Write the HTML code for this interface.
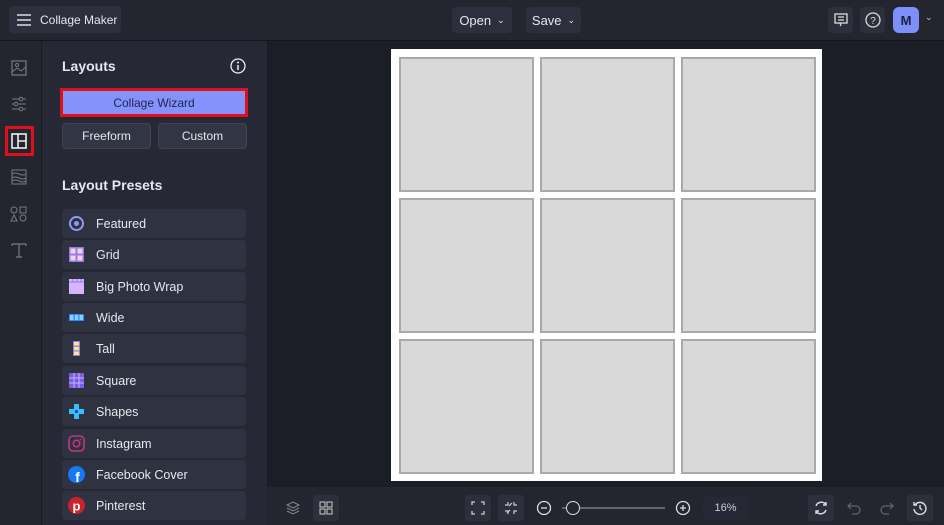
<!DOCTYPE html>
<html><head><style>
*{box-sizing:border-box;margin:0;padding:0}
body{width:944px;height:525px;background:#1c1e27;font-family:"Liberation Sans",sans-serif;color:#e6e7ee;position:relative;overflow:hidden}
.abs{position:absolute}
.top{left:0;top:0;width:944px;height:41px;background:#23252f;border-bottom:1px solid #15161d}
.btn{position:absolute;background:#2d303c;border-radius:4px;font-size:13px;display:flex;align-items:center;justify-content:center;color:#e6e7ee;white-space:nowrap}
.rail{left:0;top:41px;width:42px;height:484px;background:#23252f;border-right:1px solid #1a1b22}
.panel{left:42px;top:41px;width:225px;height:484px;background:#262935}
.row{position:absolute;left:62px;width:184px;height:29px;background:#2f3240;border-radius:4px;font-size:12.5px;display:flex;align-items:center;padding-left:34px;white-space:nowrap}
.ic{position:absolute;left:7px;top:7px;width:15px;height:15px}
.cell{position:absolute;width:135px;height:135px;background:#d9d9d9;border:2px solid #a9a9a9}
.bottom{left:267px;top:487px;width:677px;height:38px;background:#23252f}
.bb{position:absolute;top:495px;width:26px;height:26px;background:#2d303c;border-radius:3px}
svg{display:block}
</style></head><body>
<div class="abs top"></div>
<div class="btn" style="left:9px;top:6px;width:112px;height:27px;justify-content:flex-start;padding-left:8px;font-size:12px">
<svg width="14" height="12"><path d="M0 1h14M0 6h14M0 11h14" stroke="#ddd" stroke-width="1.5"/></svg><span style="margin-left:9px">Collage Maker</span></div>
<div class="btn" style="left:452px;top:7px;width:60px;height:26px">Open <span style="font-size:9px;margin-left:6px">&#8964;</span></div>
<div class="btn" style="left:526px;top:7px;width:55px;height:26px">Save <span style="font-size:9px;margin-left:6px">&#8964;</span></div>
<div class="btn" style="left:828px;top:7px;width:25px;height:26px"><svg width="14" height="14"><rect x="1" y="1" width="12" height="9" fill="none" stroke="#ddd" stroke-width="1.3"/><path d="M4 4h6M4 7h6M6 10l1 3" stroke="#ddd" stroke-width="1.2"/></svg></div>
<div class="btn" style="left:860px;top:7px;width:25px;height:26px"><svg width="16" height="16"><circle cx="8" cy="8" r="7" fill="none" stroke="#ddd" stroke-width="1.3"/><text x="8" y="12" font-size="10" fill="#ddd" text-anchor="middle" font-family="Liberation Sans">?</text></svg></div>
<div class="btn" style="left:893px;top:7px;width:26px;height:26px;background:#7e8ff9;border-radius:6px;color:#1d2140;font-weight:bold;font-size:13px">M</div>
<div class="abs" style="left:925px;top:12px;font-size:9px;color:#ccc">&#8964;</div>

<div class="abs rail"></div>
<svg class="abs" style="left:11px;top:60px" width="16" height="16"><rect x="1" y="1" width="14" height="14" fill="none" stroke="#777b88" stroke-width="1.2"/><path d="M1 12l5-4 4 3 5-4" fill="none" stroke="#777b88"/><circle cx="6" cy="5" r="1.5" fill="none" stroke="#777b88"/></svg>
<svg class="abs" style="left:11px;top:96px" width="16" height="16"><path d="M1 3h14M1 8h14M1 13h14" stroke="#777b88"/><circle cx="10" cy="3" r="1.8" fill="#23252f" stroke="#777b88"/><circle cx="5" cy="8" r="1.8" fill="#23252f" stroke="#777b88"/><circle cx="10" cy="13" r="1.8" fill="#23252f" stroke="#777b88"/></svg>
<div class="abs" style="left:5px;top:126px;width:29px;height:30px;border:3px solid #e0101a"></div>
<svg class="abs" style="left:11px;top:133px" width="16" height="16"><rect x="1" y="1" width="14" height="14" fill="none" stroke="#eee" stroke-width="1.6"/><path d="M7 1v14M7 8h8" stroke="#eee" stroke-width="1.6"/></svg>
<svg class="abs" style="left:11px;top:169px" width="16" height="16"><rect x="1" y="1" width="14" height="14" fill="none" stroke="#777b88"/><path d="M1 5q3-2 7 0t7 0M1 9q3-2 7 0t7 0M1 12q3-2 7 0t7 0" fill="none" stroke="#777b88"/></svg>
<svg class="abs" style="left:10px;top:206px" width="18" height="16"><circle cx="4" cy="4" r="3" fill="none" stroke="#777b88"/><rect x="10" y="1" width="6" height="6" fill="none" stroke="#777b88"/><path d="M4 9l3 6H1z" fill="none" stroke="#777b88"/><circle cx="13" cy="12" r="3" fill="none" stroke="#777b88"/></svg>
<svg class="abs" style="left:11px;top:242px" width="16" height="16"><path d="M1 2h14M8 2v13M5 15h6M1 2v2M15 2v2" stroke="#777b88" stroke-width="1.2"/></svg>

<div class="abs panel"></div>
<div class="abs" style="left:62px;top:58px;font-size:14px;font-weight:bold">Layouts</div>
<svg class="abs" style="left:230px;top:58px" width="16" height="16"><circle cx="8" cy="8" r="7" fill="none" stroke="#eee" stroke-width="1.3"/><path d="M8 7v5" stroke="#eee" stroke-width="1.5"/><circle cx="8" cy="4.5" r="1" fill="#eee"/></svg>
<div class="btn" style="left:60px;top:88px;width:188px;height:29px;background:#8592fb;border:3px solid #e0101a;border-radius:0;color:#1f2550;font-size:12px">Collage Wizard</div>
<div class="btn" style="left:62px;top:123px;width:89px;height:26px;background:#323543;border:1px solid #41444f;font-size:12px">Freeform</div>
<div class="btn" style="left:158px;top:123px;width:89px;height:26px;background:#323543;border:1px solid #41444f;font-size:12px">Custom</div>
<div class="abs" style="left:62px;top:177px;font-size:14px;font-weight:bold">Layout Presets</div>

<div class="row" style="top:209px"><svg class="ic" viewBox="0 0 15 15"><circle cx="7.5" cy="7.5" r="6.5" fill="none" stroke="#8f9af5" stroke-width="2"/><circle cx="7.5" cy="7.5" r="2.5" fill="#8f9af5"/></svg>Featured</div>
<div class="row" style="top:240px"><svg class="ic" viewBox="0 0 15 15"><rect width="15" height="15" fill="#8e7bf0"/><rect x="1.5" y="1.5" width="5" height="5" fill="#f6d3d8"/><rect x="8.5" y="1.5" width="5" height="5" fill="#f6d3d8"/><rect x="1.5" y="8.5" width="5" height="5" fill="#f6d3d8"/><rect x="8.5" y="8.5" width="5" height="5" fill="#f6d3d8"/></svg>Grid</div>
<div class="row" style="top:272px"><svg class="ic" viewBox="0 0 15 15"><rect width="15" height="15" fill="#d8b4fc"/><path d="M0 3h15M4 0v3M8 0v3M12 0v3" stroke="#8e7bf0"/></svg>Big Photo Wrap</div>
<div class="row" style="top:303px"><svg class="ic" viewBox="0 0 15 15"><rect y="4" width="15" height="7" fill="#3b82f6"/><rect x="1" y="5" width="3.5" height="5" fill="#7dd3fc"/><rect x="5.8" y="5" width="3.5" height="5" fill="#7dd3fc"/><rect x="10.5" y="5" width="3.5" height="5" fill="#7dd3fc"/></svg>Wide</div>
<div class="row" style="top:334px"><svg class="ic" viewBox="0 0 15 15"><rect x="4" width="7" height="15" fill="#8e7bf0"/><rect x="5" y="1" width="5" height="3.5" fill="#fde68a"/><rect x="5" y="5.8" width="5" height="3.5" fill="#fde68a"/><rect x="5" y="10.5" width="5" height="3.5" fill="#fde68a"/></svg>Tall</div>
<div class="row" style="top:366px"><svg class="ic" viewBox="0 0 15 15"><rect width="15" height="15" fill="#7c5ce0"/><path d="M5 0v15M10 0v15M0 5h15M0 10h15" stroke="#c4b5fd" stroke-width="1"/></svg>Square</div>
<div class="row" style="top:397px"><svg class="ic" viewBox="0 0 15 15"><rect x="5" y="0" width="5" height="15" fill="#38bdf8"/><rect x="0" y="5" width="15" height="5" fill="#38bdf8"/><rect x="6" y="6" width="3" height="3" fill="#1d4ed8"/></svg>Shapes</div>
<div class="row" style="top:429px"><svg class="ic" style="width:17px;height:17px;left:6px;top:6px" viewBox="0 0 17 17"><rect x="1" y="1" width="15" height="15" rx="4" fill="none" stroke="#c13584" stroke-width="1.6"/><circle cx="8.5" cy="8.5" r="3.3" fill="none" stroke="#c13584" stroke-width="1.5"/><circle cx="12.5" cy="4.5" r="0.9" fill="#c13584"/></svg>Instagram</div>
<div class="row" style="top:460px"><svg class="ic" style="width:17px;height:17px;left:6px;top:6px" viewBox="0 0 17 17"><circle cx="8.5" cy="8.5" r="8.5" fill="#1877f2"/><text x="9.5" y="16" font-size="14" font-weight="bold" fill="#fff" text-anchor="middle" font-family="Liberation Sans">f</text></svg>Facebook Cover</div>
<div class="row" style="top:491px"><svg class="ic" style="width:17px;height:17px;left:6px;top:6px" viewBox="0 0 17 17"><circle cx="8.5" cy="8.5" r="8.5" fill="#c8232c"/><text x="8.5" y="13.5" font-size="13" font-weight="bold" fill="#fff" text-anchor="middle" font-family="Liberation Sans">p</text></svg>Pinterest</div>

<div class="abs" style="left:391px;top:49px;width:431px;height:432px;background:#fff"></div>
<div class="cell" style="left:399px;top:57px"></div><div class="cell" style="left:540px;top:57px"></div><div class="cell" style="left:681px;top:57px"></div>
<div class="cell" style="left:399px;top:198px"></div><div class="cell" style="left:540px;top:198px"></div><div class="cell" style="left:681px;top:198px"></div>
<div class="cell" style="left:399px;top:339px"></div><div class="cell" style="left:540px;top:339px"></div><div class="cell" style="left:681px;top:339px"></div>

<div class="abs bottom"></div>
<svg class="abs" style="left:285px;top:500px" width="16" height="16"><path d="M8 2l6 3-6 3-6-3z M2 8l6 3 6-3M2 11l6 3 6-3" fill="none" stroke="#888"/></svg>
<div class="bb" style="left:313px"></div>
<svg class="abs" style="left:319px;top:501px" width="14" height="14"><rect x="1" y="1" width="5" height="5" fill="none" stroke="#ccc"/><rect x="8" y="1" width="5" height="5" fill="none" stroke="#ccc"/><rect x="1" y="8" width="5" height="5" fill="none" stroke="#ccc"/><rect x="8" y="8" width="5" height="5" fill="none" stroke="#ccc"/></svg>
<div class="bb" style="left:465px"></div>
<svg class="abs" style="left:471px;top:501px" width="14" height="14"><path d="M1 4V1h3M10 1h3v3M13 10v3h-3M4 13H1v-3" fill="none" stroke="#ccc" stroke-width="1.3"/></svg>
<div class="bb" style="left:498px"></div>
<svg class="abs" style="left:504px;top:501px" width="14" height="14"><path d="M1 4h3V1M10 1v3h3M13 10h-3v3M4 13v-3H1M5 5l3-3M6 9l-3 3" fill="none" stroke="#ccc" stroke-width="1.2"/></svg>
<svg class="abs" style="left:536px;top:500px" width="16" height="16"><circle cx="8" cy="8" r="6.5" fill="none" stroke="#ddd" stroke-width="1.3"/><path d="M5 8h6" stroke="#ddd" stroke-width="1.3"/></svg>
<div class="abs" style="left:562px;top:507px;width:103px;height:2px;background:#666"></div>
<div class="abs" style="left:566px;top:501px;width:14px;height:14px;border-radius:50%;border:1.5px solid #ddd;background:#23252f"></div>
<svg class="abs" style="left:675px;top:500px" width="16" height="16"><circle cx="8" cy="8" r="6.5" fill="none" stroke="#ddd" stroke-width="1.3"/><path d="M5 8h6M8 5v6" stroke="#ddd" stroke-width="1.3"/></svg>
<div class="abs" style="left:703px;top:497px;width:45px;height:22px;background:#262935;font-size:11px;color:#ccc;text-align:center;line-height:22px">16%</div>
<div class="bb" style="left:808px"></div>
<svg class="abs" style="left:813px;top:500px" width="16" height="16"><path d="M3 6a5.5 5.5 0 0 1 10-1M13 10a5.5 5.5 0 0 1-10 1" fill="none" stroke="#ddd" stroke-width="1.4"/><path d="M13 2v3h-3M3 14v-3h3" fill="none" stroke="#ddd" stroke-width="1.4"/></svg>
<svg class="abs" style="left:846px;top:501px" width="16" height="14"><path d="M5 2L2 5l3 3M2 5h8a4 4 0 0 1 0 8H6" fill="none" stroke="#666" stroke-width="1.2"/></svg>
<svg class="abs" style="left:879px;top:501px" width="16" height="14"><path d="M11 2l3 3-3 3M14 5H6a4 4 0 0 0 0 8h4" fill="none" stroke="#666" stroke-width="1.2"/></svg>
<div class="bb" style="left:907px"></div>
<svg class="abs" style="left:912px;top:500px" width="16" height="16"><path d="M3 5a6 6 0 1 1-1 4" fill="none" stroke="#ddd" stroke-width="1.4"/><path d="M2 2v3h3M8 5v3l2 2" fill="none" stroke="#ddd" stroke-width="1.4"/></svg>
</body></html>
